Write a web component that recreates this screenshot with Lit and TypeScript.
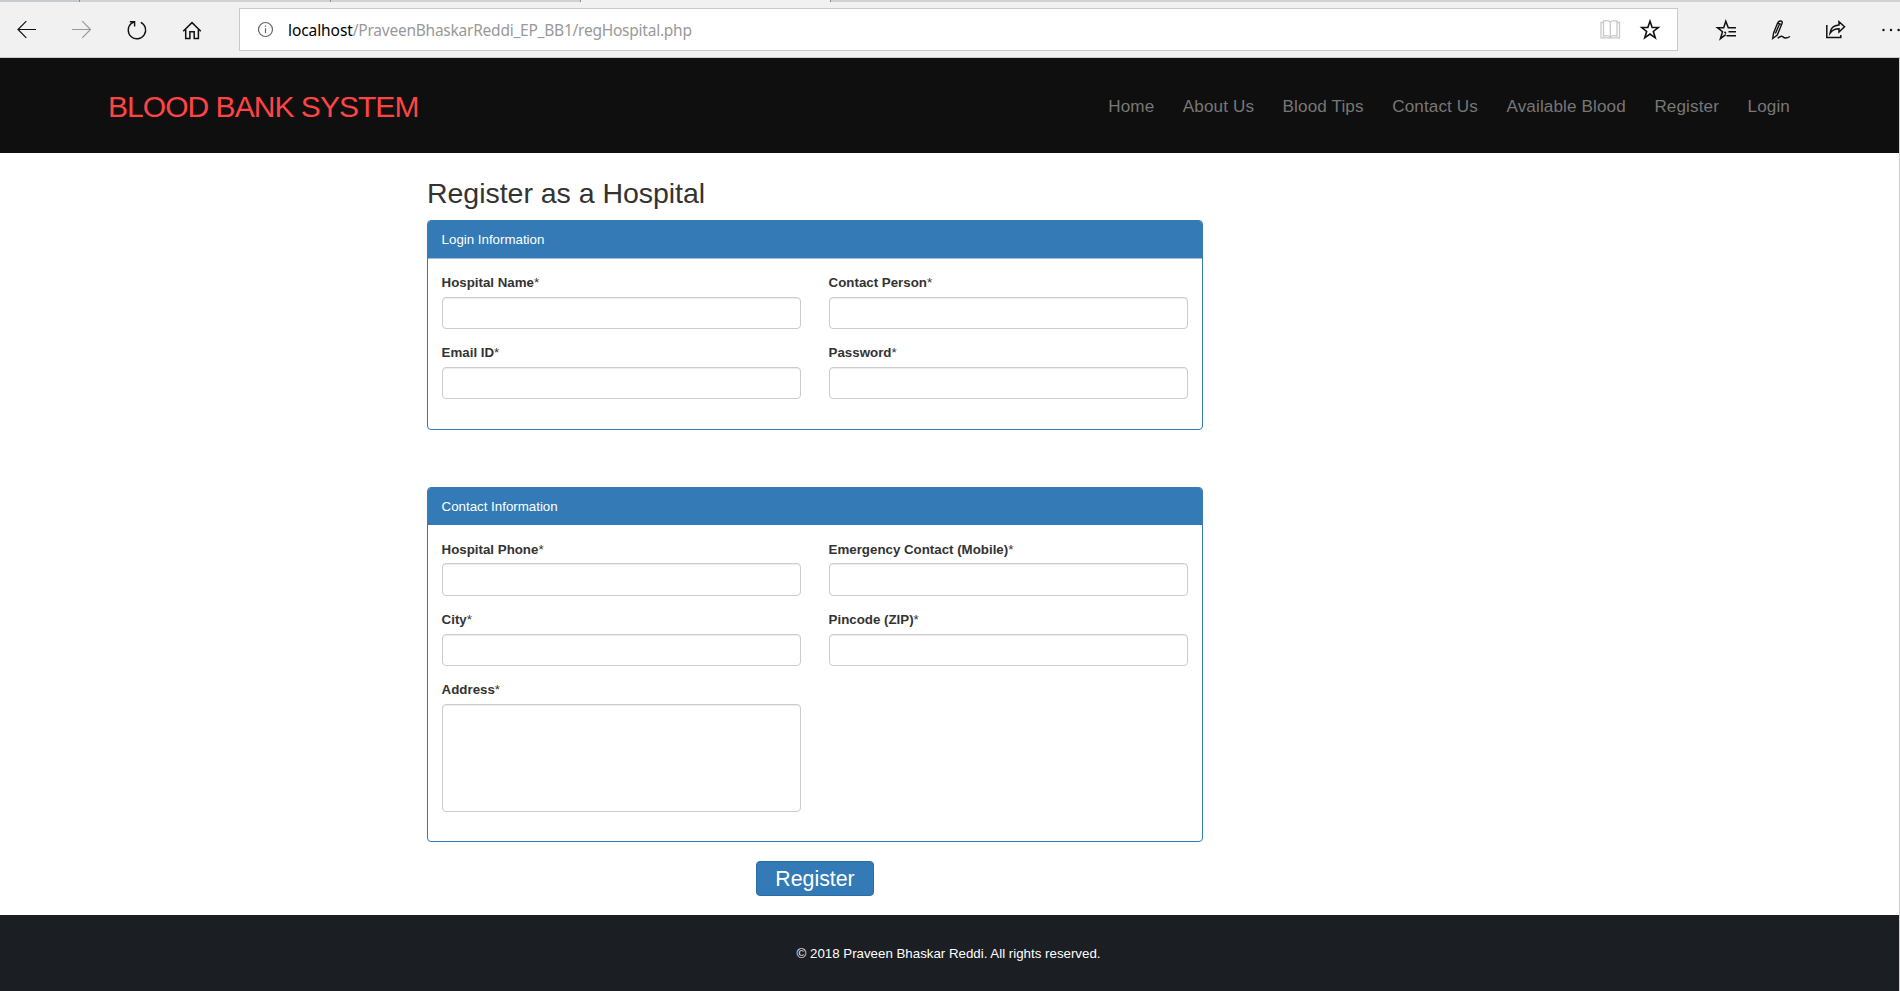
import { LitElement, html, css, svg } from "lit";
import { customElement, property } from "lit/decorators.js";

interface Field {
  label: string;
  type: "text" | "password" | "email" | "area";
}

const icons: Record<string, unknown> = {
  back: svg`<path d="M21 11.500H3M11.300 3.200L3 11.500l8.300 8.300"/>`,
  forward: svg`<path d="M3 11.500h18.500M13.200 3.200l8.300 8.300-8.300 8.300"/>`,
  refresh: svg`<path d="M15.800 4.300A8.700 8.700 0 1 1 6.200 5.600L9.500 3.700M4.800 3.700H9.600V8.600" stroke-width="1.400"/>`,
  home: svg`<path d="M3.200 13.200L12 4.600l8.800 8.600M5.700 11.500v9h4.200v-6.700h4.300v6.700h4.200v-9" stroke-width="1.500"/>`,
  info: svg`<circle cx="12.500" cy="11.500" r="7"/><path d="M12.500 10.200v5M12.500 7.500v1.300"/>`,
  book: svg`<path d="M12.300 4v14.500M12.300 4c-1.300-1.500-5-1.500-6.800-1v15c2-.5 5.500-.5 6.800 1 1.300-1.500 4.700-1.500 6.700-1V3c-1.800-.5-5.400-.5-6.700 1M5.500 4.500h-2.500v15.300h18.500V4.500h-2.500" stroke-width="1.300"/>`,
  star: svg`<path d="M12 3.200l2.150 6.300h6.100l-4.900 4 1.900 6.300L12 16l-5.250 3.800 1.900-6.300-4.900-4h6.100z" stroke-width="1.600"/>`,
  favourites: svg`<path d="M21 9.700h-7.700L10.800 3.200 8.700 9.700H2.500l5 4-2.100 7 5.300-4.100M9.500 13.700l1.500 1.800M13.500 13.700H21M11.500 17.700H21" stroke-width="1.500"/>`,
  pen: svg`<path d="M3.700 20.500L4.600 15 8.500 5.200C9.700 2.600 14.300 1.800 13 5.500L8.300 17zM8.700 5.200l3.600 1.200M10.300 6.500L6.400 15.500M8.600 20.300c1.800-1.500 3.500-3.200 5.300-1.600 1.600 2 3.500 2 7.100-.2" stroke-width="1.400"/>`,
  share: svg`<path d="M3.800 7v12.500h14v-2.500M7 15.200c.5-5 3.500-8 9-8.300V3.700l5.500 5-5.500 5.300v-3.200c-4.300 0-6.800 1.300-9 4.400z" stroke-width="1.500"/>`,
  more: svg`<circle cx="6.500" cy="12" r="1.200" fill="currentColor" stroke="none"/><circle cx="14" cy="12" r="1.200" fill="currentColor" stroke="none"/><circle cx="21.600" cy="12" r="1.200" fill="currentColor" stroke="none"/>`,
};

const icon = (name: string, tone = "") =>
  html`<svg class="icon ${tone}" viewBox="0 0 24 24">${icons[name]}</svg>`;

@customElement("browser-bar")
class BrowserBar extends LitElement {
  static styles = css`
    :host { display: block; height: 58px; background: #f1f1f1; box-sizing: border-box; border-bottom: 1px solid #ccc; overflow: hidden; }
    .tabs { display: flex; height: 2px; }
    .tab { box-sizing: border-box; width: 251px; background: #d2d2d2; border-right: 1px solid #8c8c8c; }
    .tab.first { width: 80px; background: #c5ccd2; }
    .tab.active { width: 250px; background: #f1f1f1; }
    .tab.mid { width: 250px; }
    .tab.rest { flex: 1; border: 0; }
    .bar { display: flex; height: 55px; padding: 6px 0 0 15px; align-items: flex-start; }
    .icon { display: block; flex: none; width: 24px; height: 24px; fill: none; stroke: currentColor; stroke-width: 1.200; color: #111; overflow: visible; }
    .muted { color: #999; }
    .faint { color: #c8c8c8; }
    .grey { color: #666; }
    .nav { display: grid; flex: none; grid-template-columns: 54px 56px 55px 59px; padding-top: 10px; }
    .address { display: flex; flex: none; box-sizing: border-box; width: 1439px; height: 43px; border: 1px solid #c9c9c9; background: #fff; padding: 9px 15px 0 13px; }
    .url { flex: 1; padding: 1px 0 0 11px; font: 15.500px/23px "Noto Sans", sans-serif; color: #999; letter-spacing: -0.240px; white-space: nowrap; }
    .host { color: #000; letter-spacing: -0.080px; }
    .marks { display: flex; gap: 16px; }
    .actions { display: flex; flex: none; gap: 30px; padding: 10px 0 0 37px; }
  `;
  render() {
    return html`
      <div class="tabs">
        <div class="tab first"></div><div class="tab"></div><div class="tab mid"></div>
        <div class="tab active"></div><div class="tab rest"></div>
      </div>
      <div class="bar">
        <div class="nav">${icon("back")}${icon("forward", "muted")}${icon("refresh")}${icon("home")}</div>
        <div class="address">
          ${icon("info", "grey")}
          <div class="url"><span class="host">localhost</span>/PraveenBhaskarReddi_EP_BB1/regHospital.php</div>
          <div class="marks">${icon("book", "faint")}${icon("star")}</div>
        </div>
        <div class="actions">${icon("favourites")}${icon("pen")}${icon("share")}${icon("more")}</div>
      </div>`;
  }
}

@customElement("form-panel")
class FormPanel extends LitElement {
  @property() heading = "";
  @property({ attribute: false }) fields: Field[] = [];

  static styles = css`
    :host { display: block; box-sizing: border-box; border: 1px solid #337ab7; border-radius: 4px; background: #fff; color: #333; }
    .heading { box-sizing: border-box; height: 37px; padding: 9px 13.600px; border-radius: 3px 3px 0 0; background: #337ab7; color: #fff; line-height: 19px; }
    .body { display: grid; grid-template-columns: 359px 359px; gap: 14px 28px; padding: 15px 14px 29px; }
    :host([ruled]) .body { border-top: 1px solid #9dbfdd; padding: 14px 14px 30px; }
    .label { display: block; font-weight: 700; line-height: 19px; margin: 0 0 5px -0.400px; }
    .star { font-weight: 400; }
    .input { display: block; box-sizing: border-box; width: 100%; height: 32px; margin: 0; border: 1px solid #ccc; border-radius: 4px; background: #fff; box-shadow: inset 0 1px 1px rgba(0, 0, 0, 0.075); resize: none; outline: none; }
    .input.area { height: 108px; }
    :host(:not([ruled])) .field:nth-child(-n + 2) .label { margin-bottom: 4px; }
    :host(:not([ruled])) .field:nth-child(-n + 2) .input { height: 33px; }
  `;
  render() {
    return html`
      <div class="heading">${this.heading}</div>
      <div class="body">
        ${this.fields.map(
          (f) => html`<div class="field">
            <label class="label">${f.label}<span class="star">*</span></label>
            ${f.type === "area"
              ? html`<textarea class="input area"></textarea>`
              : html`<input class="input" type=${f.type} />`}
          </div>`
        )}
      </div>`;
  }
}

@customElement("app-root")
class AppRoot extends LitElement {
  static styles = css`
    :host { display: block; height: 991px; overflow: hidden; background: #fff; font: 13.300px/19px "Liberation Sans", Arial, sans-serif; color: #333; }
    .page { display: flex; flex-direction: column; box-sizing: border-box; height: 933px; border-right: 1px solid #cfcfcf; }
    .header { display: flex; flex: none; box-sizing: border-box; height: 95px; justify-content: space-between; align-items: center; background: #0f0f0f; padding: 2px 109px 0 108px; }
    .brand { font-size: 30px; line-height: 40px; letter-spacing: -0.960px; color: #ff4444; }
    .menu { display: flex; gap: 28.500px; font-size: 17.100px; line-height: 24px; letter-spacing: 0.125px; color: #777; }
    .main { flex: 1; width: 776px; margin-left: 427px; display: flex; flex-direction: column; }
    .title { margin: 25px 0 11px; font-size: 28.500px; line-height: 31px; font-weight: 400; letter-spacing: -0.030px; }
    .contact { margin-top: 57px; }
    .submit { align-self: center; box-sizing: border-box; width: 118px; height: 35px; margin: 19px 0 0; padding: 1px 0 0; border: 1px solid #2e6da4; border-radius: 4px; background: #337ab7; color: #fff; font: 21.300px/32px "Liberation Sans", Arial, sans-serif; }
    .footer { flex: none; box-sizing: border-box; height: 76px; padding: 29px 2px 0 0; background: #1b1e23; color: #fff; text-align: center; }
  `;
  private menu = ["Home", "About Us", "Blood Tips", "Contact Us", "Available Blood", "Register", "Login"];
  private login: Field[] = [
    { label: "Hospital Name", type: "text" },
    { label: "Contact Person", type: "text" },
    { label: "Email ID", type: "email" },
    { label: "Password", type: "password" },
  ];
  private contact: Field[] = [
    { label: "Hospital Phone", type: "text" },
    { label: "Emergency Contact (Mobile)", type: "text" },
    { label: "City", type: "text" },
    { label: "Pincode (ZIP)", type: "text" },
    { label: "Address", type: "area" },
  ];
  render() {
    return html`
      <browser-bar></browser-bar>
      <div class="page">
        <header class="header">
          <div class="brand">BLOOD BANK SYSTEM</div>
          <nav class="menu">${this.menu.map((m) => html`<span>${m}</span>`)}</nav>
        </header>
        <main class="main">
          <h2 class="title">Register as a Hospital</h2>
          <form-panel ruled heading="Login Information" .fields=${this.login}></form-panel>
          <form-panel class="contact" heading="Contact Information" .fields=${this.contact}></form-panel>
          <button class="submit">Register</button>
        </main>
        <footer class="footer">© 2018 Praveen Bhaskar Reddi. All rights reserved.</footer>
      </div>`;
  }
}
